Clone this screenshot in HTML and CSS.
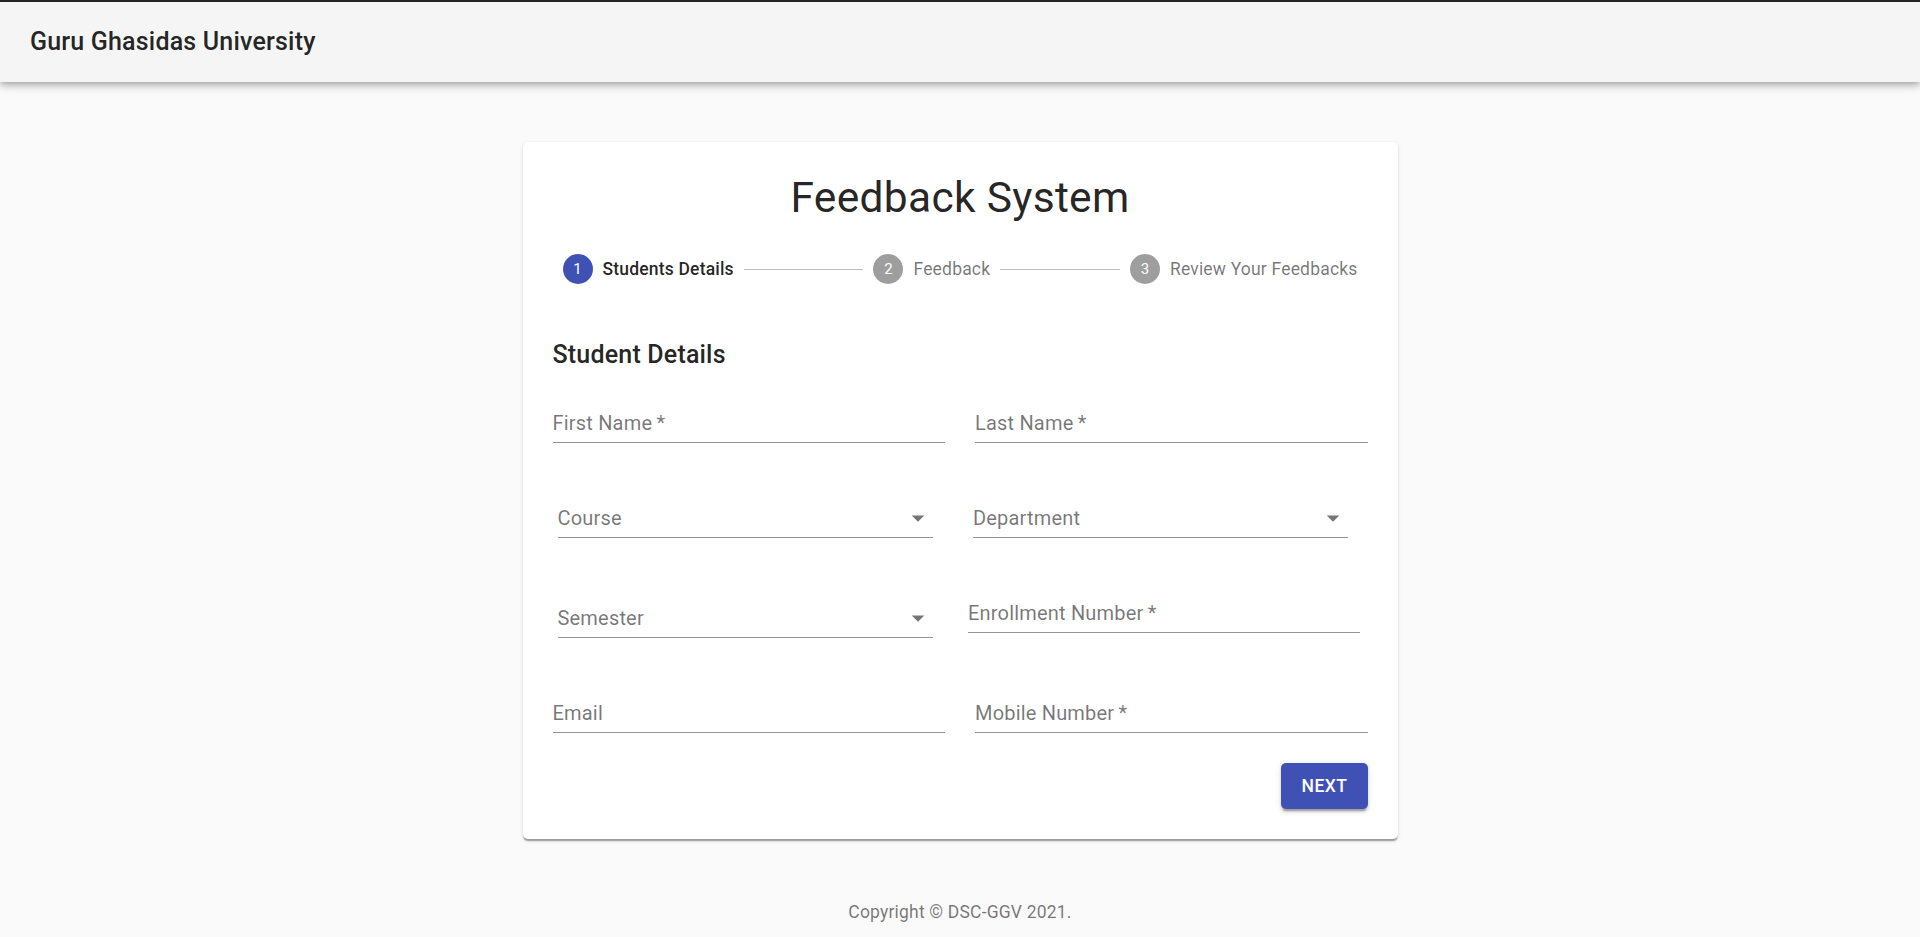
FILE: index.html
```html
<!DOCTYPE html>
<html lang="en">
<head>
<meta charset="utf-8">
<title>Feedback System</title>
<link rel="stylesheet" href="styles.css">
</head>
<body>
<header class="appbar">
  <h1 class="appbar-title">Guru Ghasidas University</h1>
</header>
<main class="layout">
  <section class="paper">
    <h2 class="paper-title">Feedback System</h2>
    <div class="stepper">
      <div class="step">
        <span class="step-icon active">1</span>
        <span class="step-label active">Students Details</span>
      </div>
      <div class="connector"></div>
      <div class="step">
        <span class="step-icon">2</span>
        <span class="step-label">Feedback</span>
      </div>
      <div class="connector"></div>
      <div class="step">
        <span class="step-icon">3</span>
        <span class="step-label">Review Your Feedbacks</span>
      </div>
    </div>
    <h3 class="section-title">Student Details</h3>
    <form class="form-grid">
      <div class="field">
        <label class="field-label">First Name&thinsp;*</label>
        <div class="field-input"></div>
      </div>
      <div class="field">
        <label class="field-label">Last Name&thinsp;*</label>
        <div class="field-input"></div>
      </div>
      <div class="field select sel-left">
        <label class="field-label">Course</label>
        <div class="field-input"></div>
        <svg class="arrow" viewBox="0 0 24 24"><path d="M7 10l5 5 5-5z"/></svg>
      </div>
      <div class="field select sel-right">
        <label class="field-label">Department</label>
        <div class="field-input"></div>
        <svg class="arrow" viewBox="0 0 24 24"><path d="M7 10l5 5 5-5z"/></svg>
      </div>
      <div class="field select sel-left">
        <label class="field-label">Semester</label>
        <div class="field-input"></div>
        <svg class="arrow" viewBox="0 0 24 24"><path d="M7 10l5 5 5-5z"/></svg>
      </div>
      <div class="field enroll">
        <label class="field-label">Enrollment Number&thinsp;*</label>
        <div class="field-input"></div>
      </div>
      <div class="field">
        <label class="field-label">Email</label>
        <div class="field-input"></div>
      </div>
      <div class="field">
        <label class="field-label">Mobile Number&thinsp;*</label>
        <div class="field-input"></div>
      </div>
    </form>
    <div class="buttons">
      <button class="btn" type="button">Next</button>
    </div>
  </section>
  <p class="copyright">Copyright © DSC-GGV 2021.</p>
</main>
</body>
</html>
```

FILE: styles.css
```css
* { box-sizing: border-box; }

html, body {
  margin: 0;
  padding: 0;
}

body {
  background: #fafafa;
  font-family: Roboto, "Liberation Sans", Arial, sans-serif;
  color: rgba(0, 0, 0, 0.87);
}

.appbar {
  height: 82px;
  border-top: 2px solid #262626;
  background: #f5f5f5;
  display: flex;
  align-items: center;
  padding: 0 30px;
  box-shadow: 0 2.5px 5px -1.25px rgba(0,0,0,0.2), 0 5px 6.25px 0 rgba(0,0,0,0.14), 0 1.25px 12.5px 0 rgba(0,0,0,0.12);
  position: relative;
  z-index: 2;
}

.appbar-title {
  margin: 0;
  font-size: 25px;
  font-weight: 500;
  line-height: 1.6;
  letter-spacing: 0.0075em;
  color: rgba(0, 0, 0, 0.87);
}

.layout {
  width: 875px;
  margin: 0 auto;
}

.paper {
  margin-top: 60px;
  margin-bottom: 60px;
  padding: 30px;
  background: #fff;
  border-radius: 5px;
  box-shadow: 0 2.5px 1.25px -1.25px rgba(0,0,0,0.2), 0 1.25px 1.25px 0 rgba(0,0,0,0.14), 0 1.25px 3.75px 0 rgba(0,0,0,0.12);
}

.paper-title {
  margin: 0;
  text-align: center;
  font-size: 42.5px;
  font-weight: 400;
  line-height: 1.235;
  letter-spacing: 0.00735em;
}

.stepper {
  display: flex;
  align-items: center;
  padding: 30px 0 50px;
}

.step {
  display: flex;
  align-items: center;
  padding: 0 10px;
}

.step-icon {
  width: 30px;
  height: 30px;
  border-radius: 50%;
  background: rgba(0, 0, 0, 0.38);
  color: #fff;
  font-size: 15px;
  display: flex;
  align-items: center;
  justify-content: center;
  flex-shrink: 0;
}

.step-icon.active {
  background: #3f51b5;
}

.step-label {
  padding-left: 10px;
  font-size: 17.5px;
  line-height: 1.43;
  letter-spacing: 0.01071em;
  color: rgba(0, 0, 0, 0.54);
  white-space: nowrap;
}

.step-label.active {
  color: rgba(0, 0, 0, 0.87);
  font-weight: 500;
}

.connector {
  flex: 1 1 auto;
  border-top: 1px solid #bdbdbd;
}

.section-title {
  margin: 1px 0 7.75px;
  font-size: 25px;
  font-weight: 500;
  line-height: 1.6;
  letter-spacing: 0.0075em;
}

.form-grid {
  display: grid;
  grid-template-columns: 1fr 1fr;
  column-gap: 30px;
  row-gap: 30px;
  align-items: start;
  justify-items: start;
  margin: 0;
}

.field {
  position: relative;
  height: 60px;
  width: 100%;
}

.field-label {
  position: absolute;
  left: 0;
  top: 30px;
  font-size: 20px;
  line-height: 1;
  letter-spacing: 0.00938em;
  color: rgba(0, 0, 0, 0.54);
  white-space: nowrap;
}

.field-input {
  margin-top: 20px;
  height: 40px;
  border-bottom: 1px solid rgba(0, 0, 0, 0.42);
}

.select {
  width: 375px;
  margin-top: 5px;
  margin-bottom: 5px;
}

.sel-left {
  margin-left: 5px;
}

.sel-right {
  margin-left: -2px;
}

.enroll {
  width: 392px;
  margin-left: -7px;
}

.arrow {
  position: absolute;
  right: 0;
  top: 25px;
  width: 30px;
  height: 30px;
  fill: rgba(0, 0, 0, 0.54);
}

.buttons {
  display: flex;
  justify-content: flex-end;
}

.btn {
  margin-top: 30px;
  min-width: 80px;
  padding: 7.5px 20px;
  border: 0;
  border-radius: 5px;
  background: #3f51b5;
  color: #fff;
  font-family: Roboto, "Liberation Sans", Arial, sans-serif;
  font-size: 17.5px;
  font-weight: 500;
  line-height: 1.75;
  letter-spacing: 0.02857em;
  text-transform: uppercase;
  box-shadow: 0 3.75px 1.25px -2.5px rgba(0,0,0,0.2), 0 2.5px 2.5px 0 rgba(0,0,0,0.14), 0 1.25px 6.25px 0 rgba(0,0,0,0.12);
}

.copyright {
  margin: 0;
  padding-top: 1px;
  text-align: center;
  font-size: 17.5px;
  line-height: 1.43;
  letter-spacing: 0.01071em;
  color: rgba(0, 0, 0, 0.54);
}
```
